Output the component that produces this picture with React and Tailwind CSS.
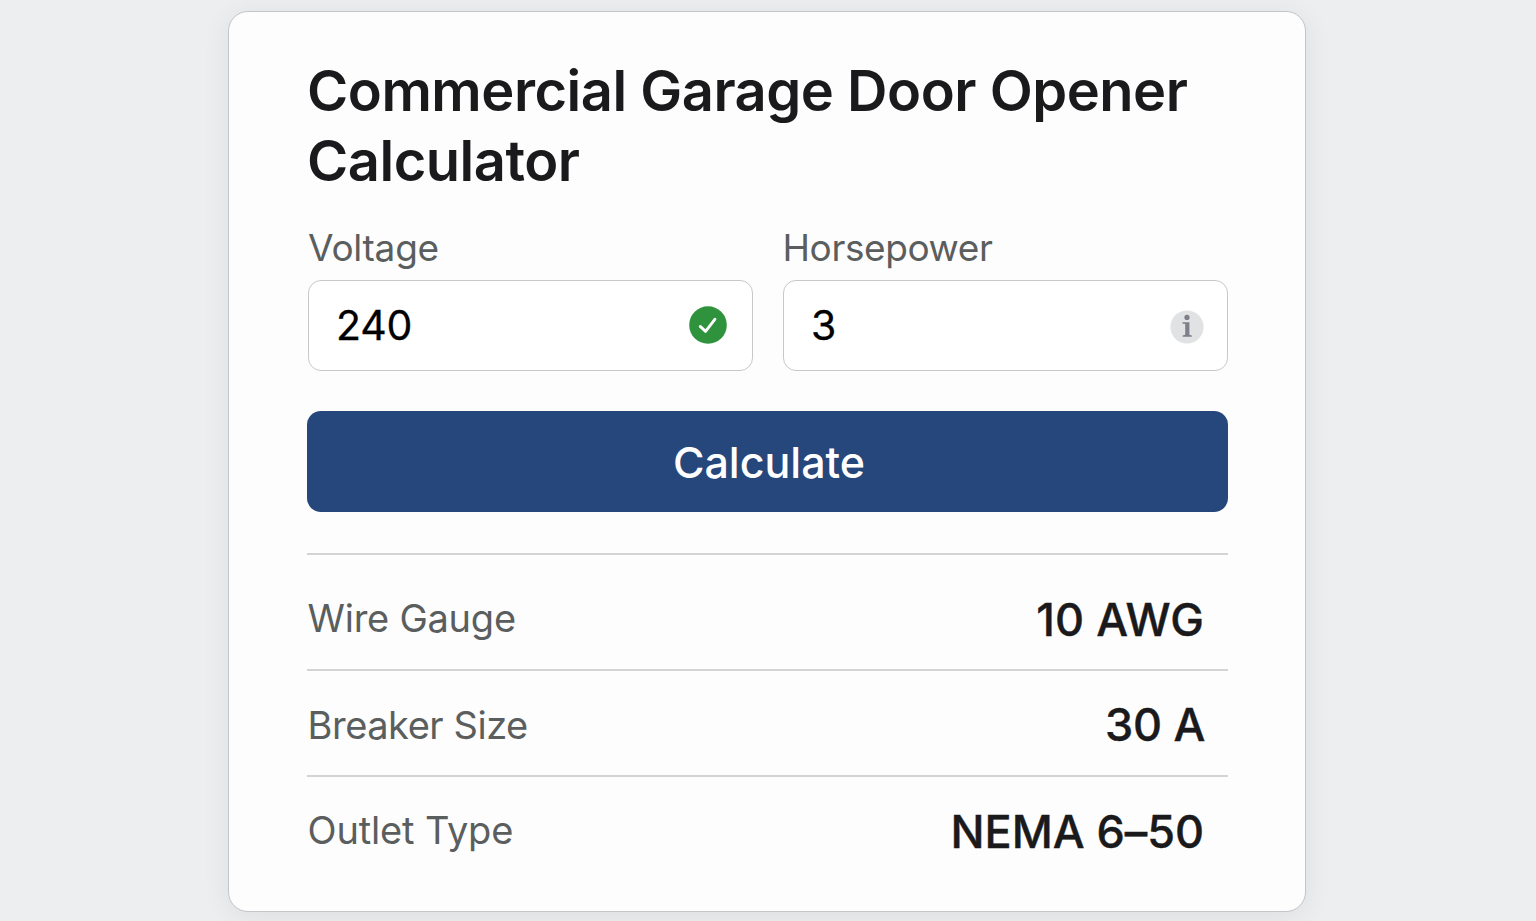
import { useState } from 'react'

const RESULTS = [
  { label: 'Wire Gauge',   value: '10 AWG',    row: 'h-[116px] pt-3', labelCls: 'tracking-[-0.25px]', valueCls: 'mt-1 tracking-[0.1px]' },
  { label: 'Breaker Size', value: '30 A',      row: 'h-[106px] pt-1', labelCls: 'tracking-[-0.45px]', valueCls: '-mr-px tracking-[-0.3px]' },
  { label: 'Outlet Type',  value: 'NEMA 6–50', row: 'h-[106px] pt-0.5', labelCls: 'tracking-[-0.15px]', valueCls: 'mt-1 tracking-[-0.05px]' },
]

function CheckBadge() {
  return (
    <svg viewBox="0 0 38 38" className="w-[38px] h-[38px] shrink-0 mr-[25px] -mt-px">
      <circle cx="19" cy="19" r="18.8" fill="#2e933c" />
      <path d="M11.2 20.4 L16.6 25.4 L26 13.2" fill="none" stroke="#fff" strokeWidth="2.8" strokeLinecap="round" strokeLinejoin="round" />
    </svg>
  )
}

function InfoBadge() {
  return (
    <svg viewBox="0 0 34 34" className="w-[34px] h-[34px] shrink-0 mr-[23px] mt-[2px]">
      <circle cx="17" cy="17" r="16.6" fill="#e0e2e4" />
      <circle cx="17" cy="7.4" r="2.6" fill="#7d808a" />
      <path d="M12.4 12.2 H19.4 V24.8 L21.8 25.4 V26.8 H12.6 V25.4 L15.2 24.8 V14 L12.4 13.6 Z" fill="#7d808a" />
    </svg>
  )
}

function Field({ label, value, onChange, labelCls, children }) {
  return (
    <label className="flex flex-col">
      <span className={`h-[44px] leading-[45px] text-[37px] text-[#5b5e5e] ${labelCls}`}>{label}</span>
      <span className="mt-[11px] h-[91px] flex items-center rounded-[13px] border-[1.5px] border-[#c6c9cb] bg-white">
        <input
          value={value}
          onChange={(e) => onChange(e.target.value)}
          className="flex-1 min-w-0 h-full pl-[27px] pb-0.5 text-[41px] tracking-[-0.2px] text-black [-webkit-text-stroke:0.3px_black] bg-transparent outline-none"
        />
        {children}
      </span>
    </label>
  )
}

export default function App() {
  const [voltage, setVoltage] = useState('240')
  const [horsepower, setHorsepower] = useState('3')

  return (
    <div className="h-[921px] overflow-hidden bg-[#edeef0] pt-[11px] font-['Inter',sans-serif]">
      <main className="w-[1078px] h-[901px] ml-[228px] pl-[78px] pr-[77px] pt-[44px] rounded-[20px] border border-[#c3c5c8] bg-[#fdfdfd] shadow-[0_4px_28px_rgba(0,0,0,0.07)]">
        <h1 className="text-[56px] leading-[70px] font-semibold tracking-[-0.48px] text-[#1a1a1c] whitespace-nowrap">
          Commercial Garage Door Opener<br />Calculator
        </h1>

        <div className="mt-[29px] ml-px grid grid-cols-2 gap-[30px]">
          <Field label="Voltage" value={voltage} onChange={setVoltage} labelCls="tracking-[-0.25px]">
            <CheckBadge />
          </Field>
          <Field label="Horsepower" value={horsepower} onChange={setHorsepower} labelCls="-ml-[0.5px] tracking-[-0.4px]">
            <InfoBadge />
          </Field>
        </div>

        <button className="mt-10 w-full h-[101px] pt-0.5 pl-[3px] flex items-center justify-center rounded-[14px] bg-[#26477b] text-white text-[43px] font-medium">
          Calculate
        </button>

        {/* Results */}
        <div className="mt-[41px]">
          {RESULTS.map(({ label, value, row, labelCls, valueCls }) => (
            <div key={label} className={`flex items-center justify-between border-t-2 border-[#d2d4d6] pl-[0.5px] pr-[24px] ${row}`}>
              <span className={`text-[38px] leading-[48px] text-[#5b5e5e] ${labelCls}`}>{label}</span>
              <span className={`text-[45px] leading-[54px] font-medium text-[#1a1a1c] [-webkit-text-stroke:0.4px_#1a1a1c] ${valueCls}`}>{value}</span>
            </div>
          ))}
        </div>
      </main>
    </div>
  )
}
